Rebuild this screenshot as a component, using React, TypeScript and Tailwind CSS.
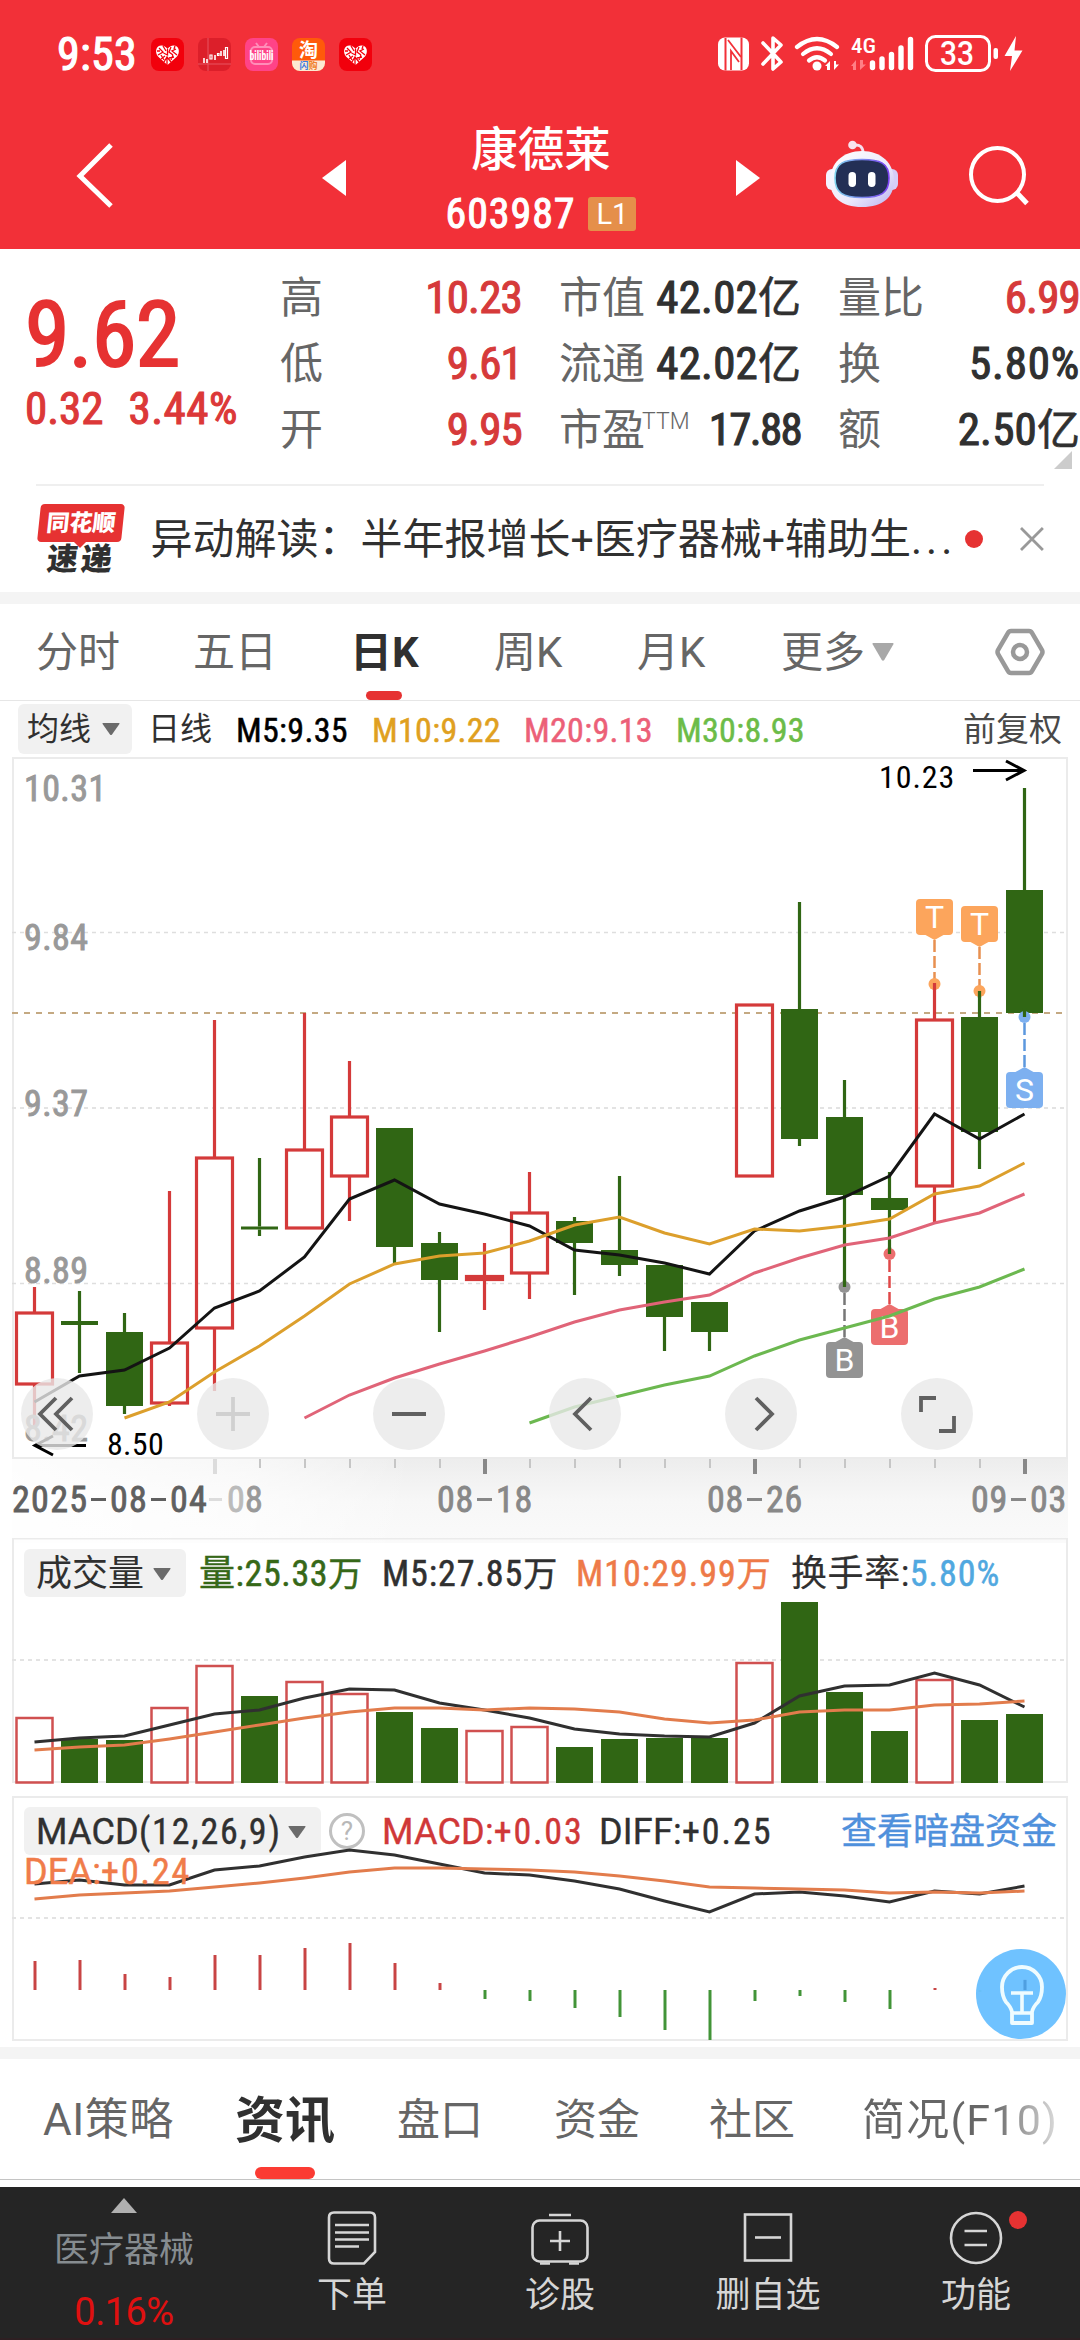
import React from "react";

const RED = "#d43a3a";
const GREEN = "#306614";

const STEP = 45;
const FIRST_X = 34.5;
const BODY = 37;

const cx = (i: number) => FIRST_X + i * STEP;

interface Candle {
  up?: boolean;
  high: number;
  top: number;
  bottom: number;
  low: number;
}

const candles: Candle[] = [
  { up: true, high: 1287, top: 1313, bottom: 1384, low: 1428 },
  { high: 1291, top: 1321, bottom: 1325, low: 1373 },
  { high: 1313, top: 1332, bottom: 1406, low: 1414 },
  { up: true, high: 1191, top: 1343, bottom: 1403, low: 1406 },
  { up: true, high: 1020, top: 1158, bottom: 1328, low: 1391 },
  { high: 1158, top: 1226.5, bottom: 1229.5, low: 1236 },
  { up: true, high: 1013, top: 1150, bottom: 1228, low: 1228 },
  { up: true, high: 1061, top: 1117, bottom: 1176, low: 1221 },
  { high: 1128, top: 1128, bottom: 1247, low: 1263 },
  { high: 1232, top: 1243, bottom: 1280, low: 1332 },
  { up: true, high: 1243, top: 1276.5, bottom: 1279.5, low: 1310 },
  { up: true, high: 1172, top: 1213, bottom: 1273, low: 1299 },
  { high: 1217, top: 1221, bottom: 1243, low: 1295 },
  { high: 1176, top: 1250, bottom: 1265, low: 1276 },
  { high: 1265, top: 1265, bottom: 1317, low: 1351 },
  { high: 1302, top: 1302, bottom: 1332, low: 1351 },
  { up: true, high: 1005, top: 1005, bottom: 1176, low: 1176 },
  { high: 902, top: 1009, bottom: 1139, low: 1146 },
  { high: 1080, top: 1117, bottom: 1195, low: 1287 },
  { high: 1172, top: 1198, bottom: 1210, low: 1254 },
  { up: true, high: 983, top: 1020, bottom: 1186, low: 1223 },
  { high: 992, top: 1017, bottom: 1132, low: 1169 },
  { high: 788, top: 890, bottom: 1013, low: 1017 },
];

const ma5 = [1402, 1376, 1370, 1348, 1308, 1291, 1257, 1199, 1180, 1204, 1214, 1226, 1250, 1255, 1263, 1274, 1231, 1211, 1197, 1176, 1114, 1139, 1114];
const ma10 = [1418, 1402, 1372, 1346, 1316, 1284, 1264, 1256, 1253, 1241, 1225, 1217, 1233, 1244, 1229, 1231, 1226, 1219, 1194, 1186, 1163];
const ma20 = [1418, 1395, 1378, 1364, 1351, 1337, 1322, 1310, 1302, 1295, 1273, 1258, 1245, 1238, 1223, 1213, 1194];
const ma30 = [1423, 1407, 1396, 1385, 1376, 1356, 1340, 1328, 1316, 1299, 1287, 1269];

const volumes = [1718, 1739, 1740, 1708, 1666, 1696, 1682, 1694, 1712, 1728, 1731, 1727, 1747, 1739, 1738, 1738, 1663, 1602, 1692, 1731, 1680, 1720, 1714];
const vol5 = [1742, 1738, 1736, 1725, 1714, 1710, 1698, 1689, 1690, 1703, 1710, 1718, 1729, 1734, 1736, 1737, 1723, 1696, 1686, 1685, 1673, 1685, 1707];
const vol10 = [1750, 1747, 1745, 1739, 1732, 1725, 1718, 1712, 1708, 1708, 1710, 1708, 1709, 1712, 1719, 1723, 1720, 1712, 1710, 1710, 1705, 1704, 1701];

const diff = [1884, 1880, 1885, 1885, 1870, 1866, 1857, 1850, 1855, 1864, 1873, 1875, 1881, 1889, 1901, 1912, 1894, 1892, 1896, 1902, 1891, 1894, 1886];
const dea = [1899, 1895, 1893, 1891, 1887, 1883, 1878, 1872, 1868, 1868, 1869, 1870, 1872, 1876, 1881, 1887, 1888, 1889, 1890, 1893, 1892, 1893, 1891];
const macd = [1961, 1960, 1974, 1977, 1955, 1955, 1948, 1943, 1963, 1983, 1999, 2001, 2008, 2017, 2030, 2040, 2001, 1996, 2002, 2009, 1988, 1992, 1979];
const MACD_BASE = 1990;

interface LineProps {
  data: number[];
  color: string;
  start?: number;
}

const Line: React.FC<LineProps> = ({ data, color, start = 0 }) => (
  <polyline
    points={data.map((y, i) => `${cx(i + start)},${y}`).join(" ")}
    fill="none"
    stroke={color}
    strokeWidth="3"
  />
);

interface MarkerProps {
  i: number;
  boxY: number;
  dotY: number;
  color: string;
  line: string;
  label: string;
}

// trade marker: a small tag tied to a candle by a dashed line
const Marker: React.FC<MarkerProps> = ({ i, boxY, dotY, color, line, label }) => {
  const x = cx(i);
  const above = boxY < dotY;
  const edge = above ? boxY + 36 : boxY;
  const tip = above ? edge + 5 : edge - 5;
  return (
    <g>
      <line x1={x} x2={x} y1={tip} y2={dotY} stroke={line} strokeWidth="2.5" strokeDasharray="12 4" />
      <circle cx={x} cy={dotY} r="6" fill={color} />
      <rect x={x - 18.5} y={boxY} width="37" height="36" rx="4" fill={color} />
      <path d={`M${x - 9} ${edge}L${x} ${tip}L${x + 9} ${edge}Z`} fill={color} />
      <text x={x} y={boxY + 29} textAnchor="middle" fontSize="32" fill="#fff" className="font-['Roboto']">
        {label}
      </text>
    </g>
  );
};

interface CaretProps {
  className?: string;
  color?: string;
  w?: number;
  h?: number;
}

const Caret: React.FC<CaretProps> = ({ className = "", color = "#6b6b6b", w = 18, h = 12 }) => (
  <svg width={w} height={h} viewBox="0 0 18 12" preserveAspectRatio="none" className={className}>
    <path d="M1 0H17Q18 0 17.4 1L10 11.4Q9 12.4 8 11.4L.6 1Q0 0 1 0Z" fill={color} />
  </svg>
);

const HeartIcon = () => (
  <svg width="33" height="33" viewBox="0 0 33 33">
    <rect width="33" height="33" rx="8" fill="#f2000c" />
    <path d="M16.500 27L7 18.500C3.500 14 5 7.500 10.500 7.500Q14 7.500 16.500 11Q19 7.500 22.500 7.500C28 7.500 29.500 14 26 18.500Z" fill="#fff" />
    <path
      d="M8 10l4 4-5 3M12 8l3 5M16.500 11v6l-4-2M14 18l-4 3M13 24l3-5 4 5M20 9l-2 5 4 3M25 11l-4 2 5 4M18 20l5-1M6 13h3M24 8l-1 3M16 20v7M10 17l3 5M22 17l-2 5"
      fill="none"
      stroke="#f2000c"
      strokeWidth="1.300"
    />
  </svg>
);

const StatusBar = () => (
  <div className="flex h-[108px] items-center pl-[57px] text-white">
    <span className="w-[94px] text-[46px] leading-[56px] tracking-[0.300px] [-webkit-text-stroke:1.200px]">9:53</span>
    <div className="flex gap-[14px]">
      <HeartIcon />
      <svg width="33" height="33" viewBox="0 0 33 33">
        <rect width="33" height="33" rx="8" fill="#dc1f2a" />
        <path d="M10 0V33M0 26H33" stroke="#e85560" strokeWidth="1" />
        <g fill="none" stroke="#fff" strokeWidth="1.600">
          <path d="M6 20v5M9 21v4M17 17v5M23 13v5M26 12v6" />
          <path d="M12 17h2v4h-2zM19.500 15.500h1.500v2h-1.500zM27.500 9.500h2v11h-2z" strokeWidth="1.200" />
        </g>
      </svg>
      <svg width="33" height="33" viewBox="0 0 33 33">
        <rect width="33" height="33" rx="8" fill="#ff4388" />
        <path d="M11 5l3 4M22 5l-3 4" stroke="#ff8db8" strokeWidth="2" />
        <rect x="6" y="9" width="21" height="17" rx="4" fill="none" stroke="#ff8db8" strokeWidth="2" />
        <text x="4.500" y="22" fontSize="12" fontWeight="700" fill="#fff" textLength="24" lengthAdjust="spacingAndGlyphs">bilibili</text>
      </svg>
      <svg width="33" height="33" viewBox="0 0 33 33">
        <rect width="33" height="33" rx="8" fill="#ff5a0a" />
        <path d="M0 22.500H33V25a8 8 0 0 1-8 8H8a8 8 0 0 1-8-8Z" fill="#fde9d2" />
        <text x="16.500" y="18.500" textAnchor="middle" fontSize="19" fontWeight="700" fill="#fff">淘</text>
        <text x="16.500" y="31" textAnchor="middle" fontSize="9" fontWeight="700" fill="#f0802c">
          <tspan fill="#3d7be0">闪</tspan>购
        </text>
      </svg>
      <HeartIcon />
    </div>
    <svg className="ml-[341px]" width="316" height="40" viewBox="712 34 316 40" fill="none">
      <rect x="717" y="37.500" width="31" height="33" rx="7" fill="#fff" />
      <path d="M724.500 38V70.500M740.500 37.500V70" stroke="#f23038" strokeWidth="2" />
      <path d="M730 70V51L738 62M727 40L740 57" stroke="#f23038" strokeWidth="1.800" />
      <path d="M762 43L780 62L772 69V38L780 45L762 64" stroke="#fff" strokeWidth="3.600" strokeLinejoin="round" strokeLinecap="round" />
      <g stroke="#fff" strokeWidth="4.200" strokeLinecap="round">
        <path d="M796 47Q816 31 836 47" />
        <path d="M802 54Q816 42.500 830 54" />
        <path d="M808 60.500Q816 54 824 60.500" />
      </g>
      <circle cx="816" cy="66" r="4.500" fill="#fff" />
      <path d="M829 61V70H826V66L824 66ZM833 61V70L838 64.500H835V61Z" fill="#fff" />
      <text x="850" y="53" fontSize="21" fontWeight="500" fill="#fff" textLength="25" lengthAdjust="spacingAndGlyphs">4G</text>
      <path d="M855 60V70H852V66H850ZM859 60V70L865 64.500H862V60Z" fill="#ff7f85" />
      <g stroke="#fff" strokeWidth="5.400" strokeLinecap="round">
        <path d="M871.500 63V67.500M881 59V67.500M890.500 54.500V67.500M900 48V67.500M909.500 39.500V67.500" />
      </g>
      <rect x="925.500" y="36.500" width="63" height="34" rx="9" stroke="#fff" strokeWidth="3" />
      <rect x="992.500" y="48" width="4.500" height="11" rx="2" fill="#fff" />
      <text x="956" y="65" textAnchor="middle" fontSize="33" fontWeight="500" fill="#fff" className="font-['Roboto']" textLength="34" lengthAdjust="spacingAndGlyphs">33</text>
      <path d="M1015 36L1003.500 56H1011L1009 71L1021.500 50.500H1013.500Z" fill="#fff" />
    </svg>
  </div>
);

const Robot = () => (
  <svg width="74" height="68" viewBox="824 140 74 68">
    <defs>
      <linearGradient id="shell" x1="0" y1="0" x2="1" y2="1">
        <stop offset="0" stopColor="#ffffff" />
        <stop offset=".6" stopColor="#ece9fb" />
        <stop offset="1" stopColor="#b9b0ef" />
      </linearGradient>
      <linearGradient id="rim" x1="0" y1="0" x2="1" y2="0">
        <stop offset="0" stopColor="#7fd4ee" />
        <stop offset="1" stopColor="#7a3ff0" />
      </linearGradient>
    </defs>
    <path d="M853 145Q862 144 862 153" fill="none" stroke="#f6dfee" strokeWidth="3" />
    <circle cx="851.500" cy="145" r="4.300" fill="#f8e3ef" />
    <rect x="825" y="169" width="12" height="21" rx="6" fill="#f4f2ff" />
    <rect x="885" y="169" width="12" height="21" rx="6" fill="#d6cdf7" />
    <path d="M861 151C880 151 893 163 893 181C893 197 882 207 861 207C840 207 829 197 829 181C829 163 842 151 861 151Z" fill="url(#shell)" />
    <path d="M861 159.500C879 159.500 888 163 888 178C888 193 880 197.500 861 197.500C842 197.500 834 193 834 178C834 163 843 159.500 861 159.500Z" fill="#232f55" stroke="url(#rim)" strokeWidth="1.600" />
    <rect x="847.500" y="172" width="7.500" height="15" rx="3.700" fill="#fff" />
    <rect x="867" y="172" width="7.500" height="15" rx="3.700" fill="#fff" />
  </svg>
);

const Header = () => (
  <div className="flex h-[141px] items-center text-white">
    <svg className="mt-[-8px] ml-[72px]" width="46" height="70" viewBox="0 0 46 70" fill="none" stroke="#fff" strokeWidth="5">
      <path d="M39 5L8 36L39 66" />
    </svg>
    <svg className="mt-[-2px] ml-[204px]" width="24" height="36" viewBox="0 0 24 36">
      <path d="M24 0V36L0 18Z" fill="#fff" />
    </svg>
    <div className="flex w-[390px] flex-col items-center pt-[4px]">
      <div className="mt-[-3px] text-[46.500px] leading-[56px] font-medium">康德莱</div>
      <div className="mt-[14px] flex h-[44px] items-center">
        <span className="text-[42px] leading-none tracking-[0.900px] [-webkit-text-stroke:1px]">603987</span>
        <span className="ml-[13px] flex h-[34px] w-[48px] items-center justify-center rounded-[3px] bg-[#e58f4a] font-['Roboto'] text-[29px] leading-none">L1</span>
      </div>
    </div>
    <svg className="mt-[-2px]" width="24" height="36" viewBox="0 0 24 36">
      <path d="M0 0V36L24 18Z" fill="#fff" />
    </svg>
    <div className="mt-[-10px] ml-[65px]">
      <Robot />
    </div>
    <svg className="mt-[-4px] ml-[66px]" width="66" height="64" viewBox="962 146 66 64" fill="none" stroke="#fff" strokeWidth="4">
      <circle cx="994.500" cy="175.500" r="26.500" />
      <path d="M1014 194L1024 204.500" strokeWidth="5" />
    </svg>
  </div>
);

interface QuoteRowProps {
  label: React.ReactNode;
  value: React.ReactNode;
  red?: boolean;
}

const QuoteRow: React.FC<QuoteRowProps> = ({ label, value, red }) => (
  <div className="flex h-[66px] items-center justify-between leading-none whitespace-nowrap">
    <span className="pt-[2px] text-[43px] text-[#666]">{label}</span>
    <span
      className={`pt-[1px] text-[45px] [-webkit-text-stroke:1.100px] ${red ? "tracking-[-0.800px] text-[#d63a3a]" : "tracking-[0.200px] text-[#303030]"}`}
    >
      {value}
    </span>
  </div>
);

const Yi = () => <span className="text-[43px] tracking-normal [-webkit-text-stroke:0.600px]">亿</span>;

const Quote = () => (
  <div className="relative flex h-[234px] pt-[14px]">
    <div className="w-[280px] pl-[25px] text-[#e63232]">
      <div className="mt-[27px] text-[90px] leading-[90px] tracking-[-0.600px] [-webkit-text-stroke:2px]">9.62</div>
      <div className="mt-[5px] flex gap-[25px] text-[45px] leading-[46px] text-[#dc3838] [-webkit-text-stroke:1.100px]">
        <span>0.32</span>
        <span className="tracking-[0.500px]">3.44%</span>
      </div>
    </div>
    <div className="w-[242px]">
      <QuoteRow label="高" value="10.23" red />
      <QuoteRow label="低" value="9.61" red />
      <QuoteRow label="开" value="9.95" red />
    </div>
    <div className="ml-[37px] w-[242px]">
      <QuoteRow label="市值" value={<>42.02<Yi /></>} />
      <QuoteRow label="流通" value={<>42.02<Yi /></>} />
      <QuoteRow
        label={
          <span className="flex items-start">
            市盈<span className="ml-[-3px] font-['Roboto'] text-[23px] leading-[26px] font-light">TTM</span>
          </span>
        }
        value={<span className="tracking-[-1.700px]">17.88</span>}
      />
    </div>
    <div className="ml-[37px] w-[242px]">
      <QuoteRow label="量比" value="6.99" red />
      <QuoteRow label="换" value={<span className="tracking-[0.800px]">5.80%</span>} />
      <QuoteRow label="额" value={<>2.50<Yi /></>} />
    </div>
    <svg className="absolute right-[8px] bottom-[15px]" width="18" height="18">
      <path d="M18 0V18H0Z" fill="#ccc" />
    </svg>
  </div>
);

const News = () => (
  <div className="mx-[36px] flex h-[108px] items-center border-t-2 border-[#efefef]">
    <div className="relative flex w-[115px] flex-col items-start">
      <div className="ml-[3px] flex h-[38px] w-[84px] -skew-x-6 items-center justify-center rounded-[4px] bg-[#e63232] text-[23px] leading-none font-black text-white">
        同花顺
      </div>
      <div className="ml-[38px] h-0 w-0 border-x-[6px] border-t-[6px] border-x-transparent border-t-[#e63232]" />
      <div className="mt-[-4px] ml-[11px] -skew-x-6 text-[31px] leading-[31px] font-black tracking-[3px] text-[#303030]">速递</div>
    </div>
    <span className="w-[806px] pt-[1px] text-[42px] leading-none whitespace-nowrap text-[#303030]">
      异动解读：半年报增长<span className="font-['Roboto'] text-[41px]">+</span>医疗器械<span className="font-['Roboto'] text-[41px]">+</span>辅助生<span className="tracking-[4px]">...</span>
    </span>
    <span className="ml-[9px] h-[18px] w-[18px] rounded-full bg-[#e63232]" />
    <svg className="ml-[37px]" width="24" height="24" viewBox="0 0 24 24" stroke="#999" strokeWidth="2.800">
      <path d="M1 1L23 23M23 1L1 23" />
    </svg>
  </div>
);

const PeriodTabs = () => (
  <div className="flex h-[97px] items-center border-b border-[#e6e6e6] pl-[36px] font-['Roboto','Noto_Sans_CJK_SC',sans-serif] text-[42px] leading-none text-[#666]">
    <span className="w-[157px] pt-[2px]">分时</span>
    <span className="w-[157px] pt-[2px]">五日</span>
    <span className="relative flex h-full w-[144px] items-center pt-[2px] font-bold text-[#303030]">
      日K
      <span className="absolute bottom-0 left-[16px] h-[9px] w-[36px] rounded-full bg-[#e63232]" />
    </span>
    <span className="w-[143px] pt-[2px]">周K</span>
    <span className="w-[144px] pt-[2px]">月K</span>
    <span className="w-[91px] pt-[2px]">更多</span>
    <Caret w={22} h={18} color="#a8a8a8" />
    <svg className="ml-[101px]" width="50" height="48" viewBox="0 0 50 48" fill="none" stroke="#999" strokeWidth="4.500">
      <path d="M16 3H34Q36 3 37 5L47 22Q48 24 47 26L37 43Q36 45 34 45H16Q14 45 13 43L3 26Q2 24 3 22L13 5Q14 3 16 3Z" />
      <circle cx="25" cy="24" r="7" />
    </svg>
  </div>
);

const MaLegend = () => (
  <div className="flex h-[56px] items-center pb-[1px] pl-[18px] text-[34px] leading-none whitespace-nowrap">
    <div className="flex h-[50px] w-[114px] items-center rounded-[6px] bg-[#f1f1f1] pt-[1px] pl-[9px] text-[32px] text-[#303030]">
      均线
      <Caret className="ml-[11px]" />
    </div>
    <span className="ml-[16px] w-[88px] pt-[1px] text-[32px] text-[#303030]">日线</span>
    <div className="flex pt-[2px] tracking-[0.300px] [-webkit-text-stroke:0.500px]">
      <span className="w-[136px] text-black">M5:9.35</span>
      <span className="w-[152px] text-[#e0a020]">M10:9.22</span>
      <span className="w-[152px] text-[#ec6078]">M20:9.13</span>
      <span className="w-[287px] text-[#6cbc48]">M30:8.93</span>
    </div>
    <span className="pt-[2px] text-[33px] text-[#484848]">前复权</span>
  </div>
);

const Frame: React.FC<{ y: number; h: number }> = ({ y, h }) => (
  <rect x="13" y={y} width="1054" height={h} fill="none" stroke="#ebebeb" strokeWidth="2" />
);

interface DashProps {
  y: number;
  color?: string;
  w?: number;
  dash?: string;
}

const Dash: React.FC<DashProps> = ({ y, color = "#e3e3e3", w = 1.5, dash = "4 4" }) => (
  <line x1="12" x2="1066" y1={y} y2={y} stroke={color} strokeWidth={w} strokeDasharray={dash} />
);

const priceLabels: [string, number][] = [
  ["10.31", 801],
  ["9.84", 950],
  ["9.37", 1116],
  ["8.89", 1283],
  ["8.42", 1441],
];

const ChartButton: React.FC<{ d: string; faint?: boolean }> = ({ d, faint }) => (
  <button className="h-[72px] w-[72px] rounded-full bg-[#e8e8e8]/80">
    <svg width="72" height="72" viewBox="0 0 72 72" fill="none" stroke={faint ? "#d0d0d0" : "#606060"} strokeWidth="3.800">
      <path d={d} />
    </svg>
  </button>
);

const KLine = () => (
  <div className="relative h-[781px]">
    <svg width="1080" height="787" viewBox="0 757 1080 787" className="absolute top-0 left-0">
      <defs>
        <linearGradient id="axis" x1="0" y1="0" x2="0" y2="1">
          <stop offset="0" stopColor="#ededed" />
          <stop offset=".5" stopColor="#f7f7f7" />
          <stop offset="1" stopColor="#fafafa" />
        </linearGradient>
        <linearGradient id="fade" x1="0" y1="0" x2="1" y2="0">
          <stop offset="0" stopColor="#fff" stopOpacity=".9" />
          <stop offset=".6" stopColor="#fff" stopOpacity=".6" />
          <stop offset="1" stopColor="#fff" stopOpacity="0" />
        </linearGradient>
      </defs>
      <rect x="12" y="1459" width="1056" height="84" fill="url(#axis)" />
      <rect x="12" y="1459" width="400" height="84" fill="url(#fade)" />
      <Frame y={758} h={700} />
      <Dash y={932.500} color="#dedede" />
      <Dash y={1108} w={2} />
      <Dash y={1283.500} color="#dedede" />
      <Dash y={1013} color="#c4a982" w={2} dash="6 6" />
      {candles.map((c, i) => {
        const x = cx(i);
        const color = c.up ? RED : GREEN;
        return (
          <g key={i} stroke={color} strokeWidth="3.200">
            {c.high < c.top && <line x1={x} x2={x} y1={c.high} y2={c.top} />}
            {c.low > c.bottom && <line x1={x} x2={x} y1={c.bottom} y2={c.low} />}
            {c.up ? (
              <rect x={x - BODY / 2 + 0.5} y={c.top} width={BODY - 1} height={c.bottom - c.top} fill="none" />
            ) : (
              <rect x={x - BODY / 2} y={c.top} width={BODY} height={c.bottom - c.top} fill={GREEN} stroke="none" />
            )}
          </g>
        );
      })}
      <g fontSize="36" fill="#999" stroke="#999" strokeWidth=".9">
        {priceLabels.map(([text, y]) => (
          <text key={text} x="24" y={y} letterSpacing="0.400">
            {text}
          </text>
        ))}
      </g>
      <Marker i={20} boxY={899} dotY={984} color="#fca55c" line="#e89050" label="T" />
      <Marker i={21} boxY={906} dotY={991} color="#fca55c" line="#e89050" label="T" />
      <Marker i={22} boxY={1072} dotY={1017} color="#7db0f0" line="#5c98de" label="S" />
      <Marker i={18} boxY={1342} dotY={1287} color="#939393" line="#777" label="B" />
      <Marker i={19} boxY={1309} dotY={1254} color="#ec6e6e" line="#e04848" label="B" />
      {/* wick ends stay visible over the marker dots */}
      <path d="M1024.500 1008V1017M979.500 991V998M844.500 1280V1287M889.500 1247V1254" stroke={GREEN} strokeWidth="3.200" />
      <path d="M934.500 983V990" stroke={RED} strokeWidth="3.200" />
      <Line data={ma5} color="#141414" />
      <Line data={ma10} start={2} color="#dc9f2c" />
      <Line data={ma20} start={6} color="#e06478" />
      <Line data={ma30} start={11} color="#6cb850" />
      <g fontSize="32" fill="#000">
        <text x="879" y="788" letterSpacing="0.900">10.23</text>
        <text x="107" y="1455" letterSpacing="0.300">8.50</text>
      </g>
      <g fill="none" stroke="#000" strokeWidth="3">
        <path d="M973 770.500H1024M1006 761L1024 770.500L1006 780" />
        <path d="M86 1445.500H35M53 1436L35 1445.500L53 1455" />
      </g>
      {candles.map((_, i) => {
        if (i < 4) return null;
        const major = i % 6 === 4;
        return (
          <line
            key={i}
            x1={cx(i) + 0.5}
            x2={cx(i) + 0.5}
            y1="1459"
            y2={major ? 1474 : 1468}
            stroke={i === 4 ? "#dcdcdc" : major ? "#888" : "#c6c6c6"}
            strokeWidth={major ? 4 : 2}
          />
        );
      })}
      <g fontSize="36" fill="#888" stroke="#888" strokeWidth=".8">
        <g fill="#606060" stroke="#606060">
          <text y="1512" x="12" letterSpacing="1.300">2025</text>
          <text y="1512" x="110" letterSpacing="1.300">08</text>
          <text y="1512" x="170" letterSpacing="1.300">04</text>
        </g>
        <path d="M91 1499.500H106M151 1499.500H166" stroke="#606060" strokeWidth="3" />
        <path d="M209 1499.500H222" stroke="#ddd" strokeWidth="3" />
        <text y="1512" x="227" fill="#bbb" stroke="#bbb">0</text>
        <text y="1512" x="245" fill="#999" stroke="#999">8</text>
        {[["08", "18", 437], ["08", "26", 707], ["09", "03", 971]].map(([m, d, x]) => (
          <g key={d}>
            <text y="1512" x={x} letterSpacing="0.800">{m}</text>
            <path d={`M${Number(x) + 40} 1499.500h15`} strokeWidth="3" />
            <text y="1512" x={Number(x) + 59} letterSpacing="0.800">{d}</text>
          </g>
        ))}
      </g>
    </svg>
    <div className="absolute top-[621px] left-[21px] flex gap-[104px]">
      <ChartButton d="M35 20L19 36L35 52M51 20L35 36L51 52" />
      <ChartButton d="M36 19V53M19 36H53" faint />
      <ChartButton d="M19 36H53" />
      <ChartButton d="M42 20L26 36L42 52" />
      <ChartButton d="M31 20L47 36L31 52" />
      <ChartButton d="M20 34V20H35M38 53H53V38" />
    </div>
  </div>
);

const Volume = () => (
  <div className="relative h-[258px] pt-[11px]">
    <svg width="1080" height="250" viewBox="0 1538 1080 250" className="absolute top-0 left-0">
      <Frame y={1538.500} h={243.500} />
      <Dash y={1660} w={2} />
      {volumes.map((y, i) =>
        candles[i].up ? (
          <rect key={i} x={cx(i) - 18} y={y} width="36" height={1782.500 - y} fill="none" stroke="#d05050" strokeWidth="2.500" />
        ) : (
          <rect key={i} x={cx(i) - 18.500} y={y} width="37" height={1783 - y} fill={GREEN} />
        )
      )}
      <Line data={vol5} color="#303030" />
      <Line data={vol10} color="#e27c4c" />
    </svg>
    <div className="relative flex h-[48px] items-center pl-[24px] text-[36px] leading-none tracking-[0.600px] whitespace-nowrap">
      <div className="flex h-[48px] w-[162px] items-center rounded-[6px] bg-[#f1f1f1] pt-[2px] pl-[12px] text-[#303030]">
        <span className="w-[117px] tracking-normal">成交量</span>
        <Caret />
      </div>
      <div className="ml-[13px] flex pt-[2px] [-webkit-text-stroke:0.500px]">
        <span className="w-[183px] text-[#366818]">量:25.33<span className="text-[34px]">万</span></span>
        <span className="w-[194px] tracking-[0.900px] text-[#303030]">M5:27.85<span className="text-[34px]">万</span></span>
        <span className="w-[215px] tracking-[1px] text-[#ee7a48]">M10:29.99<span className="text-[34px]">万</span></span>
        <span className="text-[#303030] [-webkit-text-stroke:0.200px]">换手率:</span>
        <span className="tracking-[1px] text-[#50a8e0]">5.80%</span>
      </div>
    </div>
  </div>
);

const Wide: React.FC<{ children: React.ReactNode }> = ({ children }) => (
  <span className="font-['Roboto'] tracking-[0.200px]">{children}</span>
);

const Macd = () => (
  <div className="relative h-[251px] pt-[11px]">
    <svg width="1080" height="250" viewBox="0 1796 1080 250" className="absolute top-0 left-0">
      <Frame y={1797} h={243} />
      <Dash y={1918} w={2} />
      {macd.map((y, i) => (
        <line key={i} x1={cx(i) + 0.5} x2={cx(i) + 0.5} y1={MACD_BASE} y2={y} stroke={y < MACD_BASE ? "#c84444" : "#429438"} strokeWidth="3" />
      ))}
    </svg>
    <div className="relative flex h-[48px] items-center pl-[24px] text-[36px] leading-none tracking-[0.800px] whitespace-nowrap">
      <div className="flex h-[48px] w-[297px] items-center rounded-[6px] bg-[#f1f1f1] pt-[1px] pl-[12px] text-[#303030]">
        <span className="w-[252px] [-webkit-text-stroke:0.400px]"><Wide>MACD</Wide><span className="tracking-[1.900px]">(12,26,9)</span></span>
        <Caret />
      </div>
      <span className="ml-[8px] flex h-[36px] w-[36px] items-center justify-center rounded-full border-[3px] border-[#c0c0c0] font-['Roboto'] text-[26px] tracking-normal text-[#b8b8b8]">?</span>
      <div className="ml-[17px] flex pt-[1px] [-webkit-text-stroke:0.400px]">
        <span className="w-[217px] text-[#d03838]"><Wide>MACD:</Wide><span className="tracking-[1.800px]">+0.03</span></span>
        <span className="w-[242px] text-[#303030]"><Wide>DIFF:</Wide><span className="tracking-[2px]">+0.25</span></span>
        <span className="tracking-normal text-[#4f90dc]">查看暗盘资金</span>
      </div>
    </div>
    <svg width="1080" height="250" viewBox="0 1796 1080 250" className="absolute top-0 left-0">
      <Line data={diff} color="#303030" />
      <Line data={dea} color="#e27c4c" />
    </svg>
    <span className="absolute top-[58px] left-[24px] text-[36px] leading-[36px] text-[#f07c4a] [-webkit-text-stroke:0.500px]">
      <Wide>DEA:</Wide><span className="tracking-[1.900px]">+0.24</span>
    </span>
    <svg width="90" height="90" viewBox="0 0 90 90" className="absolute top-[153px] left-[976px]" fill="none">
      <circle cx="45" cy="45" r="45" fill="#6ac0ff" fillOpacity=".97" />
      <path d="M36 74V63Q35 58 30 53Q26 47 26 38A20 20 0 0 1 66 38Q66 47 62 53Q57 58 56 63V74Z" stroke="#effcff" strokeWidth="3.800" strokeLinejoin="round" />
      <path d="M35 44H57M46 44V63M36 64H56" stroke="#effcff" strokeWidth="3.600" />
      <path d="M49 31V41" stroke="#4f9fe0" strokeWidth="3" />
    </svg>
  </div>
);

const SectionTabs = () => (
  <div className="flex h-[121px] items-center border-b border-[#c4c4c4] pl-[43px] font-['Roboto','Noto_Sans_CJK_SC',sans-serif] text-[43px] leading-none whitespace-nowrap text-[#666]">
    <span className="w-[192px] pt-[2px] text-[44px] tracking-[0.500px]">AI策略</span>
    <span className="relative flex h-full w-[162px] items-center pt-[4px] text-[50px] font-bold text-[#303030]">
      资讯
      <span className="absolute bottom-0 left-[20px] h-[12px] w-[60px] rounded-full bg-[#fb3b33]" />
    </span>
    <span className="w-[157px] pt-[2px]">盘口</span>
    <span className="w-[155px] pt-[2px]">资金</span>
    <span className="w-[153px] pt-[2px]">社区</span>
    <span className="bg-linear-to-r from-[#666] from-65% to-[#ddd] bg-clip-text pt-[10px] pb-2 tracking-[1.200px] text-transparent">简况(F10)</span>
  </div>
);

interface NavItemProps {
  label: string;
  dot?: boolean;
  children: React.ReactNode;
}

const NavItem: React.FC<NavItemProps> = ({ label, dot, children }) => (
  <div className="relative flex w-[208px] flex-col items-center pt-[20px] text-[#d6d6d6]">
    <svg width="60" height="60" viewBox="0 0 60 60" fill="none" stroke="#d6d6d6" strokeWidth="2.600">
      {children}
    </svg>
    <span className="mt-[9px] text-[35px] leading-[40px]">{label}</span>
    {dot && <span className="absolute top-[24px] left-[137px] h-[18px] w-[18px] rounded-full bg-[#e63232]" />}
  </div>
);

const BottomNav = () => (
  <div className="mt-[7px] flex h-[153px] border-b-2 border-[#2e1f22] bg-[#252525]">
    <div className="flex w-[248px] flex-col items-center pt-[11px]">
      <svg width="26" height="15" viewBox="0 0 26 15">
        <path d="M13 0L26 15H0Z" fill="#b0b0b0" />
      </svg>
      <span className="mt-[18px] text-[35px] leading-[40px] text-[#868c90]">医疗器械</span>
      <span className="mt-[19px] font-['Roboto'] text-[38px] leading-[44px] tracking-[-0.500px] text-[#e01010]">0.16%</span>
    </div>
    <NavItem label="下单">
      <path d="M12 5.500H48Q53 5.500 53 10.500V45L42 56.500H12Q7 56.500 7 51.500V10.500Q7 5.500 12 5.500Z" />
      <path d="M13 18H47M13 25.500H47M13 32.500H47M13 39.500H37" />
    </NavItem>
    <NavItem label="诊股">
      <rect x="2.500" y="13.500" width="55" height="41" rx="7" />
      <path d="M19 8H41M30 24V44M20 34H40M10 56.500H20M39 56.500H49" />
    </NavItem>
    <NavItem label="删自选">
      <rect x="7" y="7.500" width="46" height="46" />
      <path d="M17 30.500H43" />
    </NavItem>
    <NavItem label="功能" dot>
      <circle cx="30" cy="31" r="25" />
      <path d="M18.500 24H41M18.500 38H41" />
    </NavItem>
  </div>
);

export default function App() {
  return (
    <div className="flex h-[2340px] w-[1080px] flex-col overflow-hidden bg-white font-['Roboto_Condensed','Noto_Sans_CJK_SC',sans-serif]">
      <div className="mb-[1px] bg-[#f23038]">
        <StatusBar />
        <Header />
      </div>
      <Quote />
      <News />
      <div className="h-[12px] bg-[#f4f4f4]" />
      <PeriodTabs />
      <MaLegend />
      <KLine />
      <Volume />
      <Macd />
      <div className="h-[12px] bg-[#f4f4f4]" />
      <SectionTabs />
      <BottomNav />
    </div>
  );
}
